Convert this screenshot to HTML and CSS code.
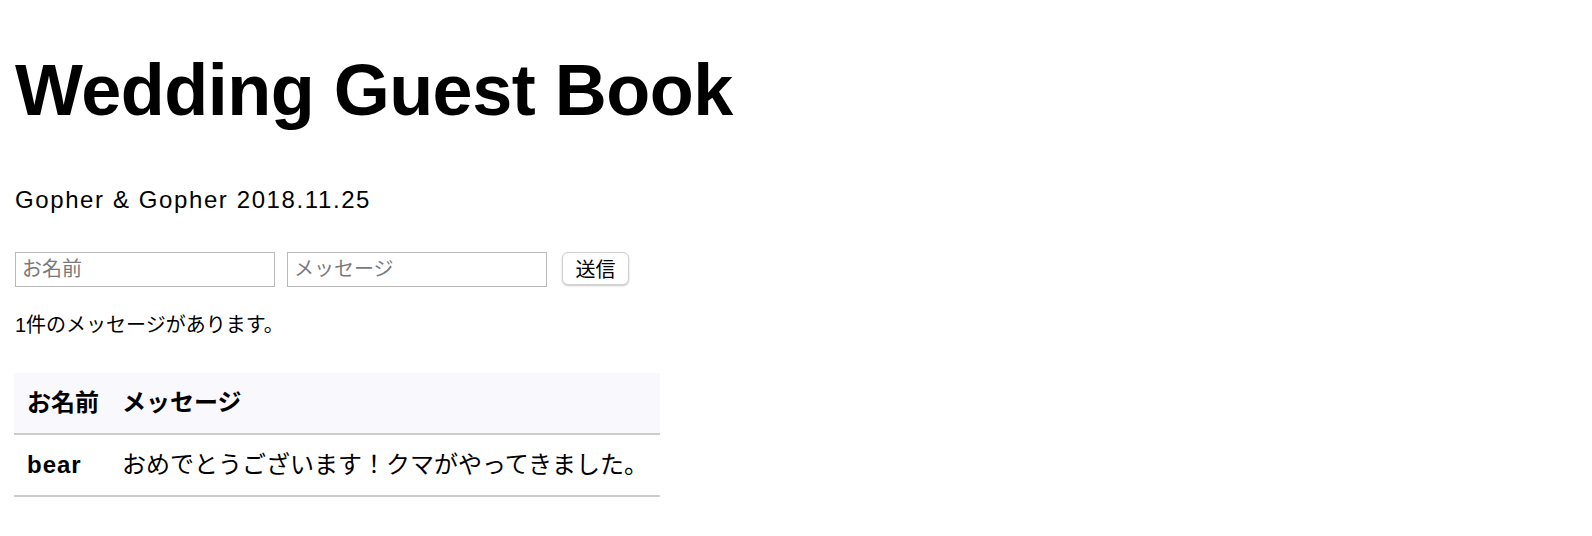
FILE: index.html
```html
<!DOCTYPE html>
<html lang="ja">
<head>
<meta charset="utf-8">
<title>Wedding Guest Book</title>
<link rel="stylesheet" href="styles.css">
</head>
<body>
<h1 class="title">Wedding Guest Book</h1>
<p class="subtitle">Gopher &amp; Gopher 2018.11.25</p>
<form class="entry-form">
  <input class="field" type="text" placeholder="お名前">
  <input class="field" type="text" placeholder="メッセージ">
  <button class="send" type="button">送信</button>
</form>
<p class="count">1件のメッセージがあります。</p>
<table class="messages">
  <thead>
    <tr><th class="col-name">お名前</th><th class="col-msg">メッセージ</th></tr>
  </thead>
  <tbody>
    <tr><td class="col-name latin">bear</td><td class="col-msg">おめでとうございます！クマがやってきました。</td></tr>
  </tbody>
</table>
</body>
</html>
```

FILE: styles.css
```css
html, body {
  margin: 0;
  background: #ffffff;
}
body {
  padding: 0 14px;
  font-family: "Liberation Sans", "Noto Sans CJK JP", sans-serif;
  color: #000;
}
.title {
  margin: 50px 0 0 1px;
  font-size: 72px;
  line-height: 80px;
  font-weight: 700;
  letter-spacing: -0.5px;
}
.subtitle {
  margin: 55px 0 0 1px;
  font-size: 24px;
  line-height: 30px;
  letter-spacing: 1.6px;
}
.entry-form {
  display: flex;
  align-items: flex-start;
  column-gap: 12px;
  margin: 37px 0 0 1px;
}
.field {
  box-sizing: border-box;
  width: 260px;
  height: 35px;
  margin: 0;
  padding: 0 6px;
  border: 1px solid #b9b9b9;
  border-radius: 0;
  font-family: "Liberation Sans", "Noto Sans CJK JP", sans-serif;
  font-size: 20px;
  color: #000;
  background: #fff;
  outline: none;
}
.field::placeholder {
  color: #7a7a7a;
}
.send {
  box-sizing: border-box;
  width: 67px;
  height: 33px;
  margin: 0 0 0 3px;
  padding: 0;
  border: 1px solid #d0d0d0;
  border-radius: 6px;
  background: #fff;
  box-shadow: 0 1px 2px rgba(0, 0, 0, 0.22);
  font-family: "Noto Sans CJK JP", sans-serif;
  font-size: 20px;
  color: #000;
}
.count {
  margin: 24px 0 0 1px;
  font-size: 20px;
  line-height: 28px;
}
.messages {
  margin-top: 34px;
  border-collapse: separate;
  border-spacing: 0;
  font-size: 24px;
}
.messages th,
.messages td {
  padding: 15px 12px 15px 13px;
  line-height: 30px;
  text-align: left;
  white-space: nowrap;
  border-bottom: 2px solid #cccccc;
}
.messages th.col-msg,
.messages td.col-msg {
  padding-left: 11px;
}
.messages th {
  background: #f8f8fd;
  font-weight: 700;
}
.messages td.latin {
  font-weight: 700;
  letter-spacing: 1px;
}
```
